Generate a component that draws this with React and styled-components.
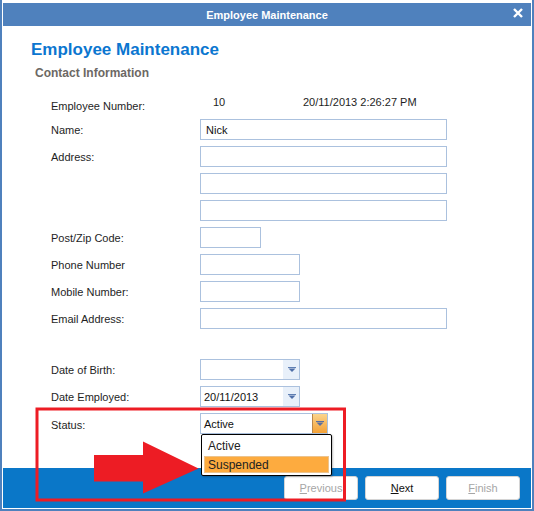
import React from 'react'
import styled, { createGlobalStyle } from "styled-components";

const GlobalStyle = createGlobalStyle`
    html, body {
        margin: 0;
        padding: 0;
        background: #ffffff;
    }
    body {
        font-family: "Liberation Sans", Arial, sans-serif;
        color: #1e1e1e;
    }
`;

const Page = styled.div`
    position: relative;
    width: 534px;
    height: 511px;
    overflow: hidden;
`;

const Window = styled.div`
    box-sizing: border-box;
    width: 534px;
    height: 511px;
    border: 2px solid #4f81bd;
    border-top: none;
    padding: 3px 1px 1px 1px;
    display: flex;
    flex-direction: column;
    background: #ffffff;
`;

const TitleBar = styled.div`
    height: 23px;
    background: #4f81bd;
    display: grid;
    grid-template-columns: 1fr auto 1fr;
    align-items: center;
    color: #ffffff;
    font-size: 11px;
    font-weight: bold;
`;

const Title = styled.span`
    grid-column: 2;
`;

const Close = styled.span`
    grid-column: 3;
    justify-self: end;
    display: flex;
    padding-right: 8px;
    margin-top: -3px;
`;

const Body = styled.div`
    flex: 1;
    padding: 14px 0 0 28px;
    position: relative;
`;

const Heading = styled.h1`
    margin: 0;
    font-size: 17px;
    line-height: 20px;
    font-weight: bold;
    color: #0b76d0;
`;

const Section = styled.h2`
    margin: 6px 0 0 4px;
    font-size: 12px;
    line-height: 14px;
    font-weight: bold;
    color: #6c6864;
`;

const Form = styled.div`
    display: grid;
    grid-template-columns: 149px 1fr;
    row-gap: 6px;
    margin: 13px 0 0 20px;
    font-size: 11px;
`;

const Label = styled.div`
    height: ${p => p.$h || 21}px;
    display: flex;
    align-items: center;
    padding-top: ${p => p.$shift || 1}px;
    box-sizing: border-box;
`;

const Value = styled.div`
    height: 20px;
    display: flex;
    align-items: flex-start;
    padding-top: 3px;
    box-sizing: border-box;
`;

const Number = styled.span`
    width: 90px;
    padding-left: 13px;
`;

const Spacer = styled.div`
    grid-column: 1 / span 2;
    height: 18px;
`;

const TextBox = styled.div`
    box-sizing: border-box;
    width: ${p => p.$w}px;
    height: 21px;
    border: 1px solid #abc1de;
    background: #ffffff;
    padding-left: 5px;
    display: flex;
    align-items: center;
    color: #111111;
`;

const Combo = styled.div`
    position: relative;
    box-sizing: border-box;
    width: ${p => p.$w}px;
    height: 21px;
    border: 1px solid #abc1de;
    background: #ffffff;
    display: flex;
    color: #111111;
`;

const ComboText = styled.div`
    flex: 1;
    padding-left: 3px;
    display: flex;
    align-items: center;
`;

const ArrowBox = styled.div`
    width: ${p => (p.$hot ? 14 : 15)}px;
    display: flex;
    align-items: center;
    justify-content: center;
    background: ${p => (p.$hot ? "linear-gradient(#fbd48c, #f3a136)" : "#e8f0fa")};
    border-left: 1px solid ${p => (p.$hot ? "#b9874a" : "#e8f0fa")};
`;

const DropList = styled.div`
    position: absolute;
    top: 20px;
    left: 0;
    width: 131px;
    box-sizing: border-box;
    border: 1px solid #000000;
    border-radius: 2px;
    background: #ffffff;
    padding: 1px 2px 2px 2px;
    box-shadow: 1px 1px 2px rgba(0, 0, 0, 0.25);
    z-index: 2;
`;

const DropItem = styled.div`
    height: 17px;
    box-sizing: border-box;
    display: flex;
    align-items: center;
    padding-left: 3px;
    margin-top: ${p => (p.$selected ? 2 : 1)}px;
    background: ${p => (p.$selected ? "#fdab3f" : "transparent")};
    border: 1px solid ${p => (p.$selected ? "#ecc38d" : "transparent")};
    color: #222222;
    font-size: 12px;
`;

const Footer = styled.div`
    height: 40px;
    background: #0a77c8;
    display: flex;
    justify-content: flex-end;
    align-items: center;
    gap: 7px;
    padding-right: 11px;
`;

const Button = styled.button`
    width: 74px;
    height: 24px;
    box-sizing: border-box;
    background: #ffffff;
    border: 1px solid #d4d4d4;
    border-radius: 3px;
    font-family: "Liberation Sans", Arial, sans-serif;
    font-size: 11px;
    color: ${p => (p.disabled ? "#a6a6a6" : "#111111")};
    padding: 0;
    u {
        text-decoration: underline;
    }
`;

const Annotation = styled.svg`
    position: absolute;
    left: 0;
    top: 0;
    pointer-events: none;
    z-index: 3;
`;

const Arrow = ({ hot }) => (
    <svg width="8" height="5" viewBox="0 0 8 5">
        <path d="M0 0.5h8" stroke={hot ? "#5a6fa0" : "#5f7fb3"} strokeWidth="1" />
        <path d="M0.5 1.5h7L4 5z" fill={hot ? "#5a6fa0" : "#4f6fa8"} />
    </svg>
);

const App = () => {
    return (
        <Page>
            <GlobalStyle />
            <Window>
                <TitleBar>
                    <Title>Employee Maintenance</Title>
                    <Close>
                        <svg width="10" height="10" viewBox="0 0 10 10">
                            <path d="M1 1L9 9M9 1L1 9" stroke="#ffffff" strokeWidth="2.4" />
                        </svg>
                    </Close>
                </TitleBar>
                <Body>
                    <Heading>Employee Maintenance</Heading>
                    <Section>Contact Information</Section>
                    <Form>
                        <Label $h={20} $shift={5}>Employee Number:</Label>
                        <Value>
                            <Number>10</Number>
                            <span>20/11/2013 2:26:27 PM</span>
                        </Value>

                        <Label>Name:</Label>
                        <TextBox $w={247}>Nick</TextBox>

                        <Label>Address:</Label>
                        <TextBox $w={247} />
                        <Label />
                        <TextBox $w={247} />
                        <Label />
                        <TextBox $w={247} />

                        <Label>Post/Zip Code:</Label>
                        <TextBox $w={61} />

                        <Label>Phone Number</Label>
                        <TextBox $w={100} />

                        <Label>Mobile Number:</Label>
                        <TextBox $w={100} />

                        <Label>Email Address:</Label>
                        <TextBox $w={247} />

                        <Spacer />

                        <Label>Date of Birth:</Label>
                        <Combo $w={100}>
                            <ComboText />
                            <ArrowBox><Arrow /></ArrowBox>
                        </Combo>

                        <Label>Date Employed:</Label>
                        <Combo $w={100}>
                            <ComboText>20/11/2013</ComboText>
                            <ArrowBox><Arrow /></ArrowBox>
                        </Combo>

                        <Label $shift={3}>Status:</Label>
                        <Combo $w={128}>
                            <ComboText>Active</ComboText>
                            <ArrowBox $hot><Arrow hot /></ArrowBox>
                            <DropList>
                                <DropItem>Active</DropItem>
                                <DropItem $selected>Suspended</DropItem>
                            </DropList>
                        </Combo>
                    </Form>
                </Body>
                <Footer>
                    <Button disabled><u>P</u>revious</Button>
                    <Button><u>N</u>ext</Button>
                    <Button disabled><u>F</u>inish</Button>
                </Footer>
            </Window>
            <Annotation width="534" height="511" viewBox="0 0 534 511">
                <rect x="37" y="409" width="307.5" height="91" fill="none" stroke="#ed1c24" strokeWidth="3" />
                <polygon
                    points="94,455 143,455 143,441.5 198.5,468.5 143,493.5 143,481.5 94,481.5"
                    fill="#ed1c24"
                />
            </Annotation>
        </Page>
    )
}

export default App
